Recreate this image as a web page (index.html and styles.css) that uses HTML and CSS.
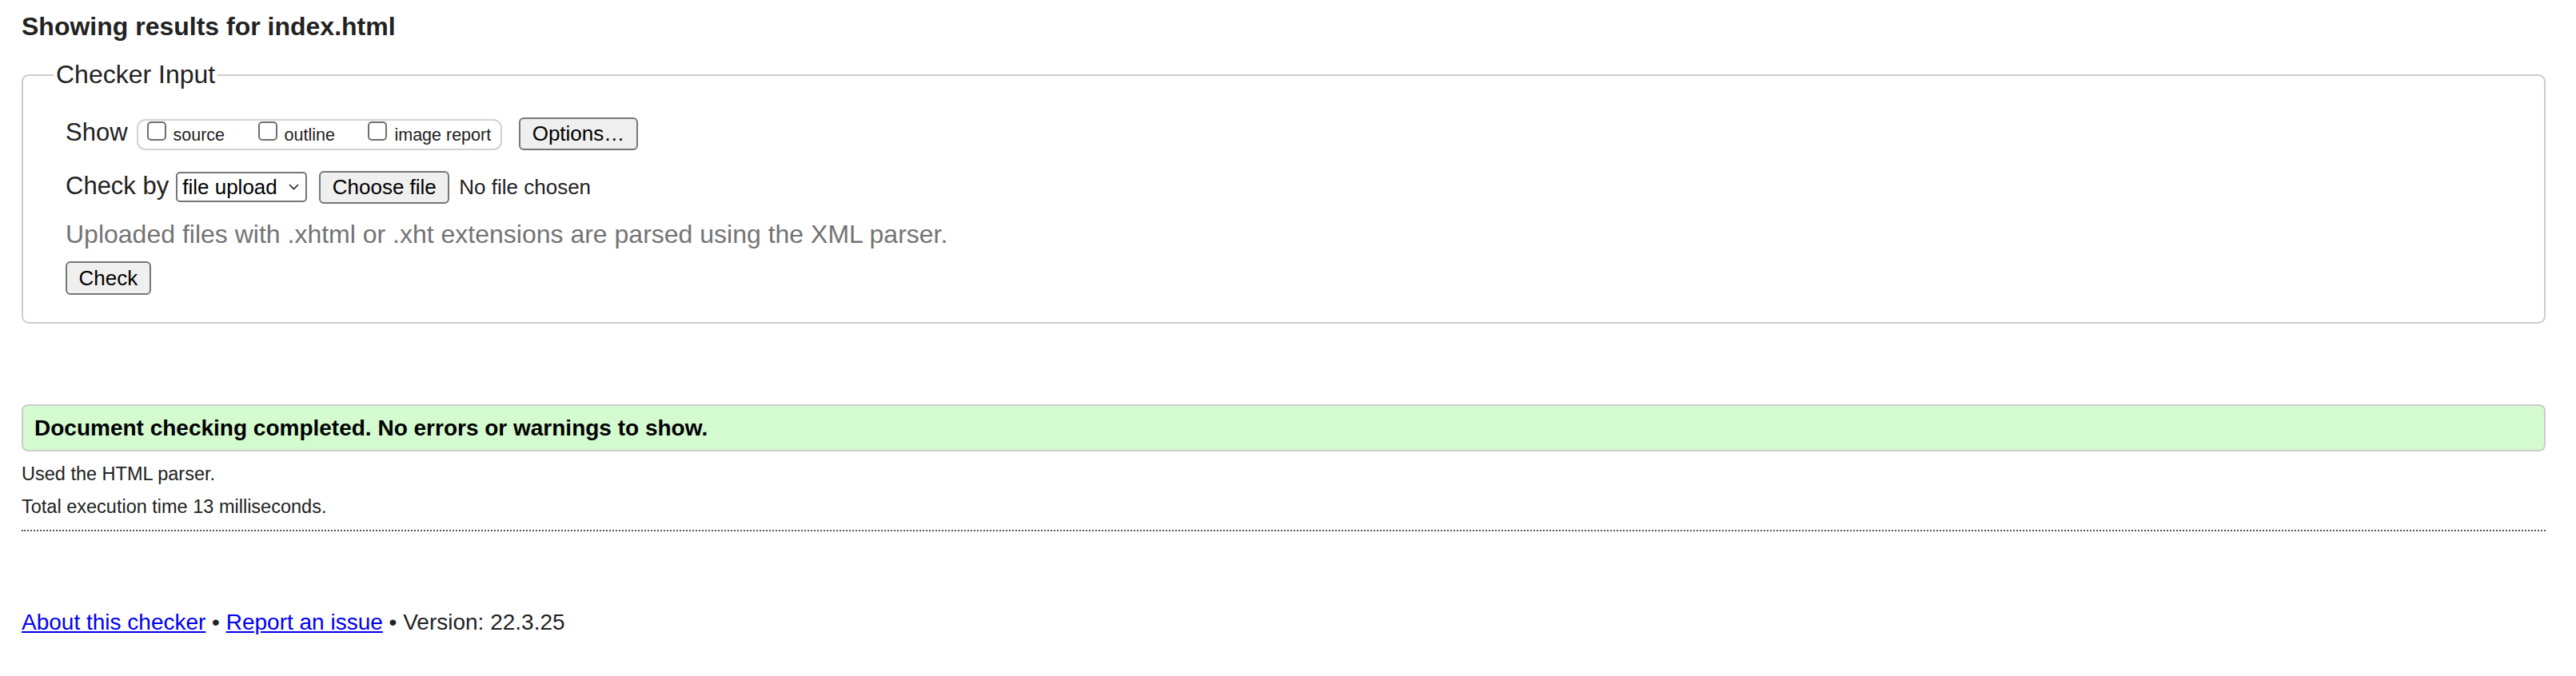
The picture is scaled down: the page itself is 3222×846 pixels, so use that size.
FILE: index.html
```html
<!DOCTYPE html>
<html lang="en">
<head>
<meta charset="utf-8">
<title>Showing results for index.html - Nu Html Checker</title>
<link rel="stylesheet" href="styles.css">
</head>
<body>
<h2 class="title">Showing results for index.html</h2>
<form class="form">
  <fieldset class="checker">
    <legend class="legend">Checker Input</legend>
    <div class="inner">
      <div class="row row-show">
        <span class="label">Show</span>
        <span class="group">
          <label class="opt"><input type="checkbox" class="cb"><span>source</span></label>
          <label class="opt"><input type="checkbox" class="cb"><span>outline</span></label>
          <label class="opt last"><input type="checkbox" class="cb"><span>image report</span></label>
        </span>
        <button type="button" class="btn btn-options">Options…</button>
      </div>
      <div class="row row-check">
        <span class="label">Check by</span>
        <span class="select">
          <select class="select-el"><option>file upload</option></select>
          <svg class="chev" width="13" height="8" viewBox="0 0 13 8" aria-hidden="true"><path d="M1 1 L6.5 6.6 L12 1" fill="none" stroke="#222" stroke-width="1.5"/></svg>
        </span>
        <button type="button" class="btn btn-file">Choose file</button>
        <span class="nofile">No file chosen</span>
      </div>
      <p class="help">Uploaded files with .xhtml or .xht extensions are parsed using the XML parser.</p>
      <button type="button" class="btn btn-check">Check</button>
    </div>
  </fieldset>
</form>
<div class="success">Document checking completed. No errors or warnings to show.</div>
<p class="stat">Used the HTML parser.</p>
<p class="stat">Total execution time 13 milliseconds.</p>
<hr class="sep">
<p class="footer"><a href="#" class="link">About this checker</a> • <a href="#" class="link">Report an issue</a> • Version: 22.3.25</p>
</body>
</html>
```
FILE: styles.css
```css
html, body {
  margin: 0;
  background: #fff;
}
body {
  padding: 0 38px 0 27px;
  font-family: "Liberation Sans", Arial, Helvetica, sans-serif;
  color: #222;
}
.title {
  margin: 15px 0 23px;
  font-size: 32px;
  line-height: 37px;
  font-weight: bold;
  color: #222;
}
.form {
  margin: 0;
}
.checker {
  margin: 0;
  padding: 34px 24px 34px 38px;
  border: 2px solid #cccccc;
  border-radius: 9px;
  min-width: 0;
}
.legend {
  font-size: 32px;
  line-height: 36px;
  padding: 0 3px 2px;
  color: #222;
}
.inner {
  padding-left: 15px;
}
.row {
  display: flex;
  align-items: baseline;
}
.label {
  font-size: 31px;
  color: #222;
}
.row-show .label {
  margin-right: 11px;
}
.group {
  display: inline-flex;
  align-items: baseline;
  box-sizing: border-box;
  height: 39px;
  padding: 1px 12px 0 11px;
  border: 2px solid #d2d2d2;
  border-radius: 11px;
  margin-right: 21px;
}
.opt {
  display: inline-flex;
  align-items: baseline;
  font-size: 21.5px;
  color: #222;
  margin-right: 41.5px;
}
.opt.last {
  margin-right: 0;
}
.cb {
  -webkit-appearance: none;
  appearance: none;
  box-sizing: border-box;
  width: 24px;
  height: 24px;
  margin: 0 9px 0 0;
  border: 2px solid #6f6f6f;
  border-radius: 5px;
  background: #fff;
}
.btn {
  box-sizing: border-box;
  height: 41px;
  padding: 0 14.5px;
  margin: 0;
  font-family: "Liberation Sans", Arial, Helvetica, sans-serif;
  font-size: 26px;
  color: #000;
  background: #efefef;
  border: 2px solid #767676;
  border-radius: 6px;
}
.row-check {
  margin-top: 26px;
}
.row-check .label {
  margin-right: 9px;
}
.select {
  display: inline-flex;
  align-items: center;
  box-sizing: border-box;
  width: 164px;
  height: 38px;
  padding: 0 8px 0 6px;
  border: 2px solid #767676;
  border-radius: 5px;
  background: #fff;
  margin-right: 15px;
}
.select-el {
  -webkit-appearance: none;
  appearance: none;
  border: 0;
  margin: 0;
  padding: 0;
  background: transparent;
  font-family: "Liberation Sans", Arial, Helvetica, sans-serif;
  font-size: 26px;
  color: #000;
  flex: 1;
  min-width: 0;
  outline: none;
}
.chev {
  flex: none;
  display: block;
}
.nofile {
  font-size: 26px;
  color: #222;
  margin-left: 12px;
}
.help {
  margin: 20px 0 15px;
  font-size: 32px;
  color: #737373;
}
.btn-check {
  height: 42px;
  display: block;
}
.success {
  margin-top: 101px;
  box-sizing: border-box;
  height: 59px;
  padding: 0 14px;
  border: 2px solid #cccccc;
  border-radius: 8px;
  background: #d4fad0;
  color: #000;
  font-size: 28px;
  font-weight: bold;
  line-height: 55px;
}
.stat {
  margin: 0;
  font-size: 23.5px;
  line-height: 41px;
  color: #222;
}
.stat:first-of-type {
  margin-top: 8px;
}
.sep {
  margin: 8px 0 0;
  border: 0;
  border-top: 2px dotted #555;
  height: 0;
}
.footer {
  margin: 98px 0 0;
  font-size: 28px;
  color: #222;
}
.link {
  color: #0000ee;
  text-decoration: underline;
}
```
